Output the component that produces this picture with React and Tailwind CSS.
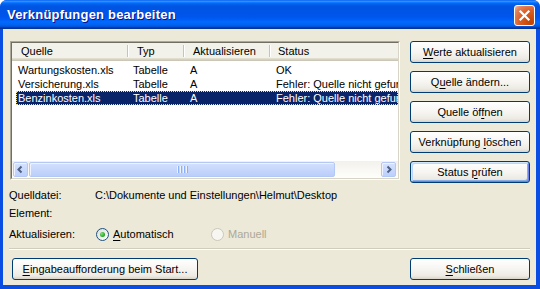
import React from 'react';

const rows = [
    { quelle: 'Wartungskosten.xls', typ: 'Tabelle', akt: 'A', status: 'OK' },
    { quelle: 'Versicherung.xls', typ: 'Tabelle', akt: 'A', status: 'Fehler: Quelle nicht gefunden' },
    { quelle: 'Benzinkosten.xls', typ: 'Tabelle', akt: 'A', status: 'Fehler: Quelle nicht gefunden', selected: true },
];

const Btn = ({ children, isDefault, className = '' }) => (
    <div
        className={`flex items-center justify-center h-[22px] rounded-[3px] border border-[#003C74] bg-[linear-gradient(180deg,#FFFFFF_0%,#F6F5F1_50%,#ECEAE2_85%,#D8D3C8_100%)] whitespace-nowrap ${isDefault ? 'shadow-[inset_1px_1px_0_#CEE7FF,inset_-1px_-1px_0_#6982EE,inset_2px_2px_0_#BCD4F6,inset_-2px_-2px_0_#89ADE4]' : ''} ${className}`}
    >
        <span>{children}</span>
    </div>
);

const U = ({ children }) => <span className="underline underline-offset-[2px]">{children}</span>;

const HeaderSep = () => <div className="w-[1px] h-[12px] bg-[#C7C5B2] shadow-[1px_0_0_#FFFFFF]"></div>;

const ArrowBtn = ({ dir }) => (
    <div className="w-[15px] h-[15px] rounded-[2px] border border-[#B4C8F6] bg-[linear-gradient(180deg,#D6E2FE,#BCD0FB)] shadow-[inset_1px_1px_0_#EEF3FF] flex items-center justify-center">
        <svg width="9" height="9" viewBox="0 0 9 9">
            {dir === 'left' ? (
                <polyline points="5.5,1.5 2.5,4.5 5.5,7.5" fill="none" stroke="#4D6185" strokeWidth="2" />
            ) : (
                <polyline points="3.5,1.5 6.5,4.5 3.5,7.5" fill="none" stroke="#4D6185" strokeWidth="2" />
            )}
        </svg>
    </div>
);

const Radio = ({ checked, disabled }) => (
    <div
        className={`w-[13px] h-[13px] rounded-full border flex items-center justify-center ${disabled ? 'border-[#CAC8BB] bg-[#F7F6F1]' : 'border-[#1C5180] bg-[linear-gradient(135deg,#DCDCD7,#FFFFFF)]'}`}
    >
        {checked && <div className="w-[5px] h-[5px] rounded-full bg-[radial-gradient(circle_at_35%_35%,#7BE57A,#21A121_70%)]"></div>}
    </div>
);

export default function App() {
    return (
        <div className="w-[540px] h-[289px] bg-white">
            <div className="w-full h-full flex flex-col rounded-t-[7px] overflow-hidden bg-[#0A4DE3] font-['Liberation_Sans',Arial,sans-serif] text-[11px] text-black">
                {/* title bar */}
                <div className="h-[29px] shrink-0 flex items-center pl-[7px] pr-[5px] bg-[linear-gradient(180deg,#0058EE_0%,#3593FF_4%,#288EFF_6%,#127DFF_8%,#036FFC_10%,#0262EE_14%,#0057E5_20%,#0054E3_24%,#0055EB_56%,#005BF5_66%,#026AFE_76%,#0062EF_86%,#0052D6_92%,#0040AB_94%,#003092_100%)]">
                    <span className="text-white font-bold text-[13px] tracking-[0.2px] [text-shadow:1px_1px_0_#0F1089]">Verknüpfungen bearbeiten</span>
                    <div className="ml-auto mt-[1px] w-[21px] h-[21px] rounded-[3px] border border-white bg-[radial-gradient(circle_at_85%_85%,#C24300_0%,#DA5E25_50%,#E4825B_80%,#F5B9A0_100%)] flex items-center justify-center">
                        <svg width="13" height="13" viewBox="0 0 13 13">
                            <line x1="2.5" y1="2.5" x2="10.5" y2="10.5" stroke="white" strokeWidth="2.2" strokeLinecap="square" />
                            <line x1="10.5" y1="2.5" x2="2.5" y2="10.5" stroke="white" strokeWidth="2.2" strokeLinecap="square" />
                        </svg>
                    </div>
                </div>

                {/* client area */}
                <div className="flex-1 ml-[3px] mr-[4px] mb-[4px] bg-[#ECE9D8] flex flex-col pl-[6px]">
                    <div className="mt-[12px] flex items-start">
                        {/* list view */}
                        <div className="ml-[1px] w-[390px] h-[139px] border border-t-[#ACA899] border-l-[#ACA899] border-r-[#FFFFFF] border-b-[#FFFFFF]">
                            <div className="w-full h-full border border-t-[#716F64] border-l-[#716F64] border-r-[#D8D4C8] border-b-[#D8D4C8] bg-white flex flex-col overflow-hidden">
                                <div className="h-[18px] shrink-0 flex items-center bg-[#F3F2EA] shadow-[inset_0_-1px_0_#CBC7B8,inset_0_-2px_0_#D6D2C2,inset_0_-3px_0_#E2DECD] pb-[2px]">
                                    <div className="w-[115px] pl-[9px]">Quelle</div>
                                    <HeaderSep />
                                    <div className="w-[55px] pl-[9px]">Typ</div>
                                    <HeaderSep />
                                    <div className="w-[85px] pl-[9px]">Aktualisieren</div>
                                    <HeaderSep />
                                    <div className="flex-1 pl-[8px]">Status</div>
                                </div>
                                <div className="mt-[2px] flex flex-col">
                                    {rows.map((r) => (
                                        <div
                                            key={r.quelle}
                                            className={`ml-[4px] h-[14px] leading-[14px] flex whitespace-nowrap overflow-hidden ${r.selected ? 'bg-[#0A246A] text-white outline outline-1 outline-dotted outline-[#F4E49A] -outline-offset-1' : ''}`}
                                        >
                                            <div className="w-[111px] shrink-0 pl-[2px]">{r.quelle}</div>
                                            <div className="w-[56px] shrink-0 pl-[6px]">{r.typ}</div>
                                            <div className="w-[86px] shrink-0 pl-[7px]">{r.akt}</div>
                                            <div className="flex-1 pl-[7px] overflow-hidden">{r.status}</div>
                                        </div>
                                    ))}
                                </div>
                                {/* horizontal scrollbar */}
                                <div className="mt-auto h-[17px] shrink-0 flex items-center pl-[1px] pr-[2px] bg-[linear-gradient(180deg,#F3F1EC,#FEFEFB)]">
                                    <ArrowBtn dir="left" />
                                    <div className="ml-[1px] w-[306px] h-[15px] rounded-[2px] border border-[#B3C8F5] bg-[linear-gradient(180deg,#D3E0FE,#BBCEF9)] shadow-[inset_1px_1px_0_#EEF3FF] flex items-center justify-center gap-[1px]">
                                        <div className="w-[1px] h-[7px] bg-[#EEF4FE] shadow-[1px_0_0_#8CB0F8]"></div>
                                        <div className="w-[1px] h-[7px] ml-[1px] bg-[#EEF4FE] shadow-[1px_0_0_#8CB0F8]"></div>
                                        <div className="w-[1px] h-[7px] ml-[1px] bg-[#EEF4FE] shadow-[1px_0_0_#8CB0F8]"></div>
                                        <div className="w-[1px] h-[7px] ml-[1px] bg-[#EEF4FE] shadow-[1px_0_0_#8CB0F8]"></div>
                                    </div>
                                    <div className="flex-1"></div>
                                    <ArrowBtn dir="right" />
                                </div>
                            </div>
                        </div>

                        {/* buttons */}
                        <div className="ml-[10px] w-[120px] flex flex-col gap-[8px]">
                            <Btn><U>W</U>erte aktualisieren</Btn>
                            <Btn>Q<U>u</U>elle ändern...</Btn>
                            <Btn>Quelle öf<U>f</U>nen</Btn>
                            <Btn>Verknüpfung <U>l</U>öschen</Btn>
                            <Btn isDefault>Status <U>p</U>rüfen</Btn>
                        </div>
                    </div>

                    <div className="mt-[5px] h-[14px] flex items-center">
                        <div className="w-[86px]">Quelldatei:</div>
                        <div>C:\Dokumente und Einstellungen\Helmut\Desktop</div>
                    </div>
                    <div className="mt-[4px] h-[14px] flex items-center">
                        <div className="w-[86px]">Element:</div>
                    </div>
                    <div className="mt-[6px] h-[16px] flex items-center">
                        <div className="w-[87px]">Aktualisieren:</div>
                        <div className="w-[115px] flex items-center gap-[4px]">
                            <Radio checked />
                            <span><U>A</U>utomatisch</span>
                        </div>
                        <div className="flex items-center gap-[4px] text-[#ACA899]">
                            <Radio disabled />
                            <span>Manuell</span>
                        </div>
                    </div>

                    <div className="mt-[6px] mr-[6px] h-[2px] border-t border-t-[#D0CDBE] border-b border-b-white"></div>

                    <div className="mt-[8px] flex">
                        <Btn className="ml-[3px] w-[186px]"><U>E</U>ingabeaufforderung beim Start...</Btn>
                        <Btn className="ml-auto mr-[6px] w-[120px]"><U>S</U>chließen</Btn>
                    </div>
                </div>
            </div>
        </div>
    );
}
